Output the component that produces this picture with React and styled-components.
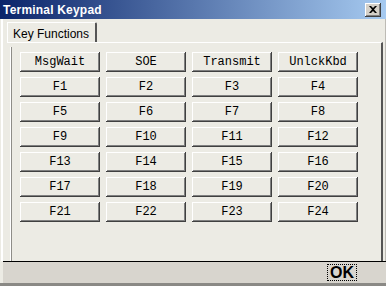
import styled, { createGlobalStyle } from "styled-components";

const GlobalStyle = createGlobalStyle`
  html, body {
    margin: 0;
    padding: 0;
    overflow: hidden;
    background: #d4d0c8;
  }
`;

const keys = [
  "MsgWait", "SOE", "Transmit", "UnlckKbd",
  "F1", "F2", "F3", "F4",
  "F5", "F6", "F7", "F8",
  "F9", "F10", "F11", "F12",
  "F13", "F14", "F15", "F16",
  "F17", "F18", "F19", "F20",
  "F21", "F22", "F23", "F24",
];

export default function App() {
  return (
    <>
      <GlobalStyle />
      <Window>
        <TitleBar>
          <Title>Terminal Keypad</Title>
          <CloseButton>
            <svg width="8" height="7" viewBox="0 0 8 7">
              <path d="M0 0h2l2 2 2-2h2L5 3.5 8 7H6L4 5 2 7H0l3-3.5z" fill="#000" />
            </svg>
          </CloseButton>
        </TitleBar>
        <Body>
          <TabStrip>
            <Tab>Key Functions</Tab>
          </TabStrip>
          <Panel>
            <Group>
              <KeyGrid>
                {keys.map((k) => (
                  <KeyButton key={k}>{k}</KeyButton>
                ))}
              </KeyGrid>
            </Group>
          </Panel>
        </Body>
        <Footer>
          <OkButton>OK</OkButton>
        </Footer>
      </Window>
    </>
  );
}

const Window = styled.div`
  width: 386px;
  height: 286px;
  box-sizing: border-box;
  display: flex;
  flex-direction: column;
  background: #ecebe4;
  border-bottom: 3px solid #8a8985;
`;

const TitleBar = styled.div`
  height: 19px;
  flex: none;
  display: flex;
  align-items: center;
  justify-content: space-between;
  padding: 0 5px 0 3px;
  background: linear-gradient(to right, #0a246a, #a6caf0);
`;

const Title = styled.span`
  color: #fff;
  font: bold 12px "Liberation Sans", Arial, sans-serif;
  letter-spacing: 0.2px;
`;

const CloseButton = styled.div`
  width: 16px;
  height: 14px;
  box-sizing: border-box;
  display: grid;
  place-content: center;
  background: #d4d0c8;
  box-shadow: inset -1px -1px #404040, inset 1px 1px #fff,
    inset -2px -2px #808080;
`;

const Body = styled.div`
  flex: 1;
  display: flex;
  flex-direction: column;
  padding: 3px 2px 0 4px;
  border-left: 2px solid #fff;
  margin-left: 1px;
  border-right: 1px solid #bdbbb5;
`;

const TabStrip = styled.div`
  display: flex;
  height: 20px;
`;

const Tab = styled.div`
  height: 20px;
  box-sizing: border-box;
  padding: 4px 6px 0 5px;
  border-top: 1px solid #fff;
  border-left: 1px solid #fff;
  border-right: 2px solid #555;
  border-top-right-radius: 2px;
  font: 12px "Liberation Sans", Arial, sans-serif;
  color: #000;
  position: relative;
  z-index: 1;
  background: #ecebe4;
  margin-bottom: -1px;
`;

const Panel = styled.div`
  flex: 1;
  display: flex;
  border-top: 1px solid #fff;
  border-right: 2px solid #555;
  padding: 4px 0 0 3px;
`;

const Group = styled.div`
  flex: 1;
  border-left: 1px solid #fff;
  box-shadow: inset 1px 0 #8e8d88;
  padding: 5px 0 0 9px;
`;

const KeyGrid = styled.div`
  display: grid;
  grid-template-columns: repeat(4, 80px);
  grid-auto-rows: 20px;
  column-gap: 6px;
  row-gap: 5px;
`;

const KeyButton = styled.button`
  margin: 0;
  padding: 0;
  border: none;
  background: #ecebe4;
  font: 12px "Liberation Mono", "Courier New", monospace;
  color: #000;
  box-shadow: inset -1px -1px #404040, inset 1px 1px #fff,
    inset -2px -2px #808080, inset 2px 2px #ecebe4;
`;

const Footer = styled.div`
  height: 21px;
  flex: none;
  display: flex;
  align-items: center;
  justify-content: flex-end;
  padding-right: 29px;
  border-top: 1px solid #000;
  background: #d8d5ce;
  margin-left: 3px;
`;

const OkButton = styled.button`
  margin: 0;
  padding: 0 2px;
  height: 17px;
  border: 1px dotted #000;
  background: transparent;
  font: bold 16px "Liberation Sans", Arial, sans-serif;
  line-height: 15px;
  color: #000;
`;
